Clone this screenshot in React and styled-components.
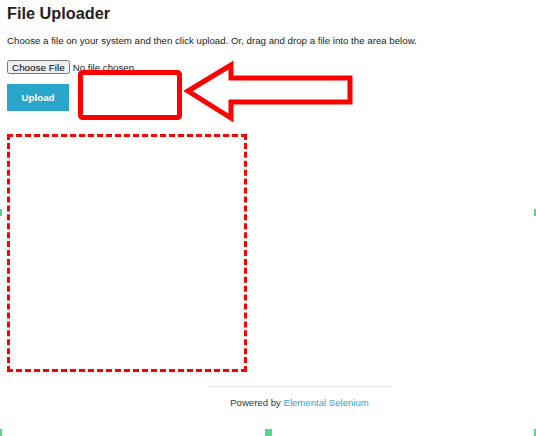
import React from "react";
import styled, { createGlobalStyle } from "styled-components";

const GlobalStyle = createGlobalStyle`
  html, body {
    margin: 0;
    padding: 0;
    background: #fff;
  }
  body {
    font-family: "Liberation Sans", Arial, sans-serif;
    color: #222;
  }
`;

const Page = styled.div`
  position: relative;
  width: 536px;
  height: 436px;
  overflow: hidden;
`;

const Content = styled.main`
  display: flex;
  flex-direction: column;
  align-items: flex-start;
  padding: 4px 0 0 7px;
`;

const Heading = styled.h3`
  margin: 0;
  font-size: 16.3px;
  line-height: 19px;
  font-weight: bold;
  color: #222;
`;

const Intro = styled.p`
  margin: 11px 0 0;
  font-size: 9.7px;
  line-height: 13px;
`;

const UploadForm = styled.form`
  display: flex;
  flex-direction: column;
  align-items: flex-start;
  gap: 10px;
  margin-top: 13px;
`;

const FileInput = styled.input`
  font-family: "Liberation Sans", Arial, sans-serif;
  font-size: 9.7px;
  color: #222;
  margin: 0;
  height: 14px;

  &::file-selector-button {
    font-family: "Liberation Sans", Arial, sans-serif;
    font-size: 9.9px;
    padding: 0 3px;
    margin-right: 3px;
    height: 14px;
  }
`;

const UploadButton = styled.button`
  width: 62px;
  height: 27px;
  border: 0;
  padding: 0;
  background: #2ba6cb;
  color: #fff;
  font-family: "Liberation Sans", Arial, sans-serif;
  font-size: 9.8px;
  font-weight: bold;
  cursor: pointer;
`;

const DropArea = styled.div`
  margin-top: 23px;
  width: 234px;
  height: 232px;
  border: 3px dashed #f00;
`;

const Footer = styled.footer`
  margin: 14px 0 0 201px;
  width: 183px;
  border-top: 1px solid #e5e5e5;
  padding-top: 10px;
  text-align: center;
  font-size: 9.6px;
  color: #333;
`;

const Link = styled.a`
  color: #2ba6cb;
  text-decoration: none;
`;

const Annotation = styled.svg`
  position: absolute;
  left: 0;
  top: 0;
  pointer-events: none;
`;

const Handle = styled.div`
  position: absolute;
  width: ${({ $w }) => $w}px;
  height: ${({ $h }) => $h}px;
  left: ${({ $x }) => $x}px;
  top: ${({ $y }) => $y}px;
  background: #5ad38c;
`;

export default function App() {
  return (
    <Page>
      <GlobalStyle />
      <Content>
        <Heading>File Uploader</Heading>
        <Intro>
          Choose a file on your system and then click upload. Or, drag and
          drop a file into the area below.
        </Intro>
        <UploadForm onSubmit={(e) => e.preventDefault()}>
          <FileInput type="file" name="file" />
          <UploadButton type="submit">Upload</UploadButton>
        </UploadForm>
        <DropArea />
        <Footer>
          Powered by <Link href="#">Elemental Selenium</Link>
        </Footer>
      </Content>

      <Annotation width="536" height="436" viewBox="0 0 536 436">
        <rect
          x="80.5"
          y="72.5"
          width="99"
          height="45"
          rx="2"
          fill="none"
          stroke="#f00"
          strokeWidth="5"
        />
        <path
          d="M188 91 L231 65 L231 78 L350 78 L350 102 L231 102 L231 118 Z"
          fill="none"
          stroke="#f00"
          strokeWidth="5"
          strokeLinejoin="miter"
        />
      </Annotation>

      <Handle $x={0} $y={209} $w={2} $h={7} />
      <Handle $x={534} $y={209} $w={2} $h={7} />
      <Handle $x={265} $y={429} $w={7} $h={7} />
      <Handle $x={0} $y={429} $w={2} $h={7} />
      <Handle $x={534} $y={429} $w={2} $h={7} />
    </Page>
  );
}
